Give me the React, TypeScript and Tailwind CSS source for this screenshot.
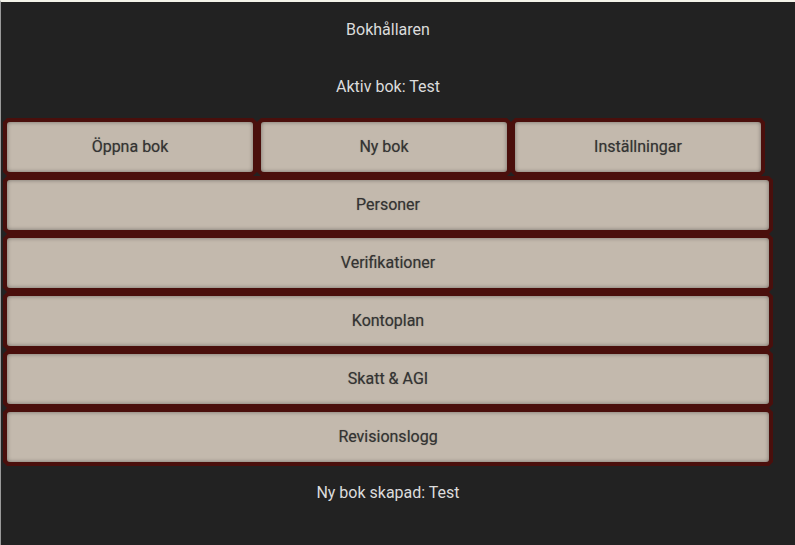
const topButtons = ["Öppna bok", "Ny bok", "Inställningar"];
const mainButtons = ["Personer", "Verifikationer", "Kontoplan", "Skatt & AGI", "Revisionslogg"];

function MenuButton({ label, className }: { label: string; className: string }) {
  return (
    <button
      className={`${className} h-[58px] bg-[#4a0f0c] p-[4px] [clip-path:polygon(4px_0,calc(100%-4px)_0,100%_4px,100%_calc(100%-4px),calc(100%-4px)_100%,4px_100%,0_calc(100%-4px),0_4px)]`}
    >
      <span className="flex h-full w-full items-center justify-center rounded-[3px] bg-[#c3b9ad] text-[16px] font-normal text-[#333333] shadow-[inset_0_0_4px_rgba(0,0,0,0.4)] [text-shadow:0_0_1px_rgba(0,0,0,0.35)]">
        {label}
      </span>
    </button>
  );
}

export default function App() {
  return (
    <div className="h-[545px] w-[795px] overflow-hidden border-l-[1px] border-t-[2px] border-l-[#9a9a9a] border-t-[#f3f3e9] bg-[#222222] font-['Roboto',sans-serif]">
      <div className="flex w-[772px] flex-col pl-[2px]">
        <div className="flex h-[56px] items-center justify-center text-[16px] text-[#dcdcdc]">Bokhållaren</div>
        <div className="flex h-[58px] items-center justify-center text-[16px] text-[#dcdcdc]">Aktiv bok: Test</div>
        <div className="mt-[2px] flex flex-col">
          <div className="flex">
            {topButtons.map((b) => (
              <MenuButton key={b} label={b} className="w-[254px]" />
            ))}
          </div>
          {mainButtons.map((b) => (
            <MenuButton key={b} label={b} className="w-[770px]" />
          ))}
        </div>
        <div className="flex h-[54px] items-center justify-center text-[16px] text-[#dcdcdc]">Ny bok skapad: Test</div>
      </div>
    </div>
  );
}
